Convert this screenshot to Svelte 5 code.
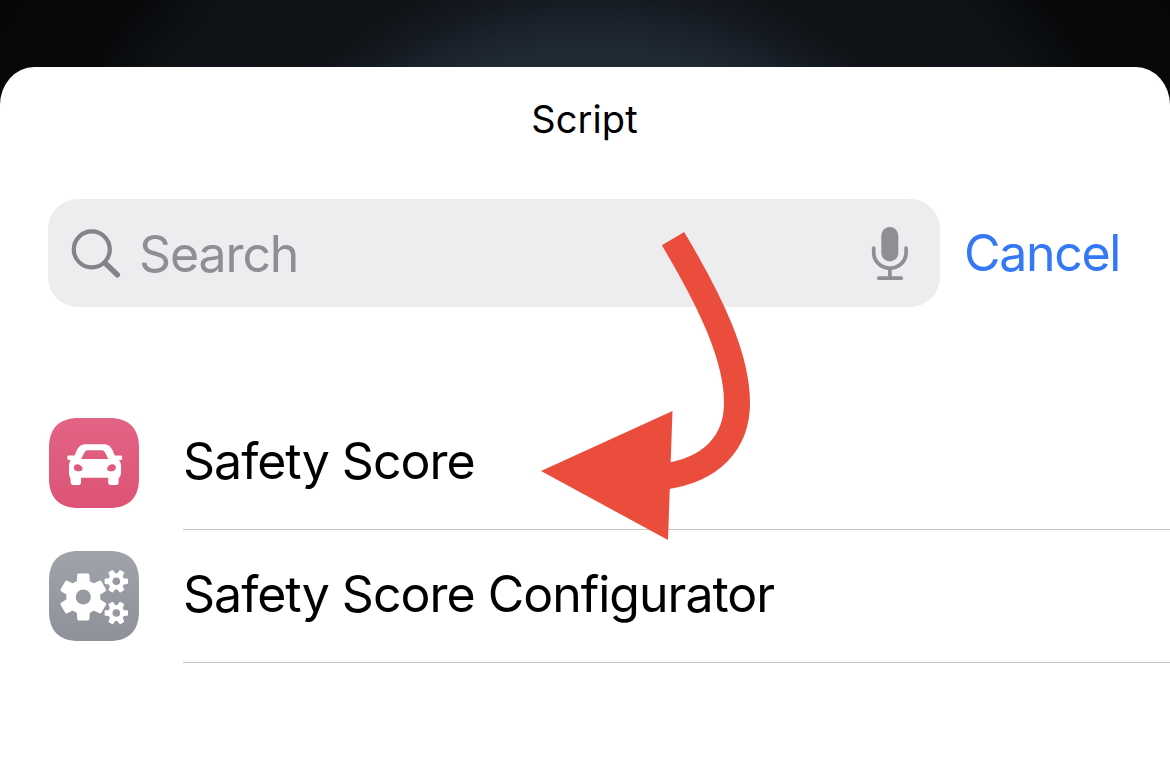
<script>
  function gear(cx, cy, outer, body, tipHalf, baseHalf, start) {
    const points = [];
    for (let i = 0; i < 6; i++) {
      const a = ((start + i * 60) * Math.PI) / 180;
      const place = (r, t) => [cx + r * Math.cos(a) - t * Math.sin(a), cy + r * Math.sin(a) + t * Math.cos(a)];
      points.push(place(body, -baseHalf), place(outer, -tipHalf), place(outer, tipHalf), place(body, baseHalf));
    }
    return 'M' + points.map((p) => p.map((n) => n.toFixed(2)).join(' ')).join('L') + 'Z';
  }

  const gears = [
    { d: gear(34.3, 46, 22, 15, 4.6, 5, 30), cx: 34.3, cy: 46, hole: 7.6, edge: 3 },
    { d: gear(67.3, 30.3, 10.7, 7, 1.7, 2.1, 0), cx: 67.3, cy: 30.3, hole: 3.8, edge: 2 },
    { d: gear(67.3, 62, 10.7, 7, 1.7, 2.1, 0), cx: 67.3, cy: 62, hole: 3.8, edge: 2 }
  ];

  const scripts = [
    { name: 'Safety Score', icon: 'car' },
    { name: 'Safety Score Configurator', icon: 'gears' }
  ];
</script>

<main class="screen">
  <section class="sheet">
    <h1><span>Script</span></h1>
    <div class="search-row">
      <div class="field">
        <svg class="lens" width="52" height="52" viewBox="0 0 52 52">
          <circle cx="20.8" cy="22.4" r="18" />
          <path d="M34 36L46.3 47.8" />
        </svg>
        <span class="placeholder">Search</span>
        <svg class="mic" width="38" height="56" viewBox="0 0 38 56">
          <rect x="10.3" y="1.9" width="17" height="34.5" rx="8.5" />
          <path d="M2.7 23v4.5a16.2 15.8 0 0 0 32.4 0V23M18.9 43v10M7.8 53.2h22.4" />
        </svg>
      </div>
      <span class="cancel">Cancel</span>
    </div>

    <ul>
      {#each scripts as item}
        <li>
          <svg class="icon" width="90" height="90" viewBox="0 0 90 90">
            <defs>
              <linearGradient id="fill-{item.icon}" x1="0" y1="0" x2="0" y2="1">
                <stop offset="0" stop-color={item.icon === 'car' ? '#e26484' : '#a0a3aa'} />
                <stop offset="1" stop-color={item.icon === 'car' ? '#dd5375' : '#8e9199'} />
              </linearGradient>
            </defs>
            <path
              d="M30 0H60C80 0 90 10 90 30V60C90 80 80 90 60 90H30C10 90 0 80 0 60V30C0 10 10 0 30 0Z"
              fill="url(#fill-{item.icon})"
            />
            {#if item.icon === 'car'}
              <path
                fill="#fff"
                fill-rule="evenodd"
                d="M37 26.2H54.6C59.5 26.2 61.8 28.6 63.4 32L65.8 37.6H71.6Q73.2 37.6 73.2 39V40.4Q73.2 42 71.6 42H70C71.6 44 72 46 72 49V54.5C72 57 71 59 69.6 60.5V64.2Q69.6 67 66.7 67H62.1Q59.2 67 59.2 64.2V59.7H32V64.2Q32 67 29.1 67H24.5Q21.6 67 21.6 64.2V60.5C20.6 59 20 57 20 54.5V49C20 46 20.4 44 21.8 42H20Q18.3 42 18.3 40.4V39Q18.3 37.6 20 37.6H25.6L28 32C29.6 28.6 32 26.2 37 26.2ZM38.9 32.2Q36.5 32.2 35.4 34.4L32.1 41H59.3L56.1 34.4Q55 32.2 52.6 32.2ZM24.8 49.7C24.8 47.2 26.5 45.9 28.7 46.2C31.4 46.6 33.6 48.6 33.6 50.9C33.6 52.7 31.9 53.2 28.9 53.2C26.4 53.2 24.8 52 24.8 49.7ZM66.9 49.7C66.9 47.2 65.2 45.9 63 46.2C60.3 46.6 58.1 48.6 58.1 50.9C58.1 52.7 59.8 53.2 62.8 53.2C65.3 53.2 66.9 52 66.9 49.7Z"
              />
            {:else}
              {#each gears as g}
                <path d={g.d} fill="#fff" stroke="#fff" stroke-width={g.edge} stroke-linejoin="round" />
                <circle cx={g.cx} cy={g.cy} r={g.hole} fill="#96999f" />
              {/each}
            {/if}
          </svg>
          <div class="label"><span class={item.icon}>{item.name}</span></div>
        </li>
      {/each}
    </ul>
  </section>

  <svg class="arrow" width="1170" height="769" viewBox="0 0 1170 769">
    <path class="tail" d="M673 238.7C712 304 737 358 737 403C737 443 711 470 664 476.5" />
    <path class="head" d="M541 471L672.5 411L668 540Z" />
  </svg>
</main>

<style>
  :global(body) {
    margin: 0;
  }
  .screen {
    position: relative;
    box-sizing: border-box;
    width: 1170px;
    height: 769px;
    padding-top: 67px;
    overflow: hidden;
    font-family: Inter, 'Liberation Sans', sans-serif;
    color: #000;
    background: radial-gradient(
      circle at 592px 370px,
      #202c36 0,
      #202b34 315px,
      #1b232c 345px,
      #151a22 375px,
      #101418 405px,
      #0f1115 430px,
      #101418 480px,
      #101418 500px,
      #0d1114 535px,
      #08090b 580px,
      #060708 680px
    );
  }
  .sheet {
    height: 702px;
    background: #fff;
    border-radius: 34px 34px 0 0 / 38px 38px 0 0;
  }
  h1 {
    margin: 0;
    height: 132px;
    padding-top: 28px;
    box-sizing: border-box;
    text-align: center;
    font-size: 38px;
    line-height: 48px;
    font-weight: 400;
    letter-spacing: 0.1px;
  }
  h1 span {
    margin-right: 1px;
  }
  .search-row {
    display: flex;
    align-items: center;
    gap: 25px;
    height: 108px;
    padding-left: 48px;
    font-size: 50px;
    line-height: 60px;
  }
  .field {
    display: flex;
    align-items: center;
    box-sizing: border-box;
    width: 892px;
    height: 108px;
    padding: 0 31px 0 23px;
    border-radius: 30px;
    background: #ededef;
    color: #8e8e93;
  }
  .lens {
    fill: none;
    stroke: #848488;
    stroke-width: 4.2;
    stroke-linecap: round;
  }
  .lens path {
    stroke-width: 5.4;
  }
  .placeholder {
    flex: 1;
    margin-left: 16px;
    padding-top: 2px;
    letter-spacing: -1.1px;
  }
  .mic rect {
    fill: #8e8e93;
  }
  .mic path {
    fill: none;
    stroke: #8e8e93;
    stroke-width: 3.7;
    stroke-linecap: round;
  }
  .cancel {
    margin-left: -1px;
    color: #3478f6;
    letter-spacing: -1.3px;
  }
  ul {
    list-style: none;
    margin: 90px 0 0;
    padding: 0;
  }
  li {
    display: flex;
    align-items: center;
    height: 133px;
    padding-left: 49px;
  }
  .icon {
    flex: none;
    margin: 0 44px 2px 0;
  }
  .label {
    flex: 1;
    display: flex;
    align-items: center;
    box-sizing: border-box;
    height: 133px;
    padding-bottom: 4px;
    border-bottom: 1px solid #c6c6c8;
    font-size: 50px;
    line-height: 60px;
    letter-spacing: -1px;
  }
  .arrow {
    position: absolute;
    left: 0;
    top: 0;
  }
  .tail {
    fill: none;
    stroke: #eb4d3d;
    stroke-width: 26;
  }
  .head {
    fill: #eb4d3d;
  }
</style>
